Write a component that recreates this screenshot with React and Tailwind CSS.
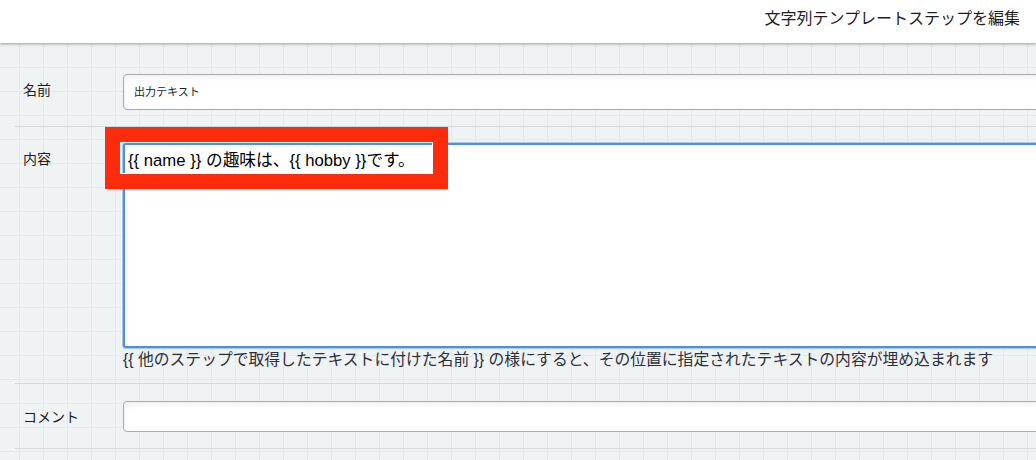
import React from 'react';

const CJK = "font-['Liberation_Sans','Noto_Sans_CJK_JP',sans-serif]";

function FieldLabel({ children }) {
  return (
    <div className="w-[100px] shrink-0 pt-[6px] text-[14px] leading-[20px] text-[#1e1e1e]">
      {children}
    </div>
  );
}

export default function App() {
  return (
    <div
      className={`relative h-[460px] w-[1036px] overflow-hidden bg-[#f0f3f4] ${CJK} bg-[linear-gradient(to_right,#e6e9eb_1px,transparent_1px),linear-gradient(to_bottom,#e6e9eb_1px,transparent_1px)] [background-size:24px_24px] [background-position:19px_19px]`}
    >
      {/* Header */}
      <header className="relative z-10 flex h-[43px] items-center justify-end bg-white pb-[6px] pr-[16px] shadow-[0_1px_3px_rgba(0,0,0,0.35)]">
        <h1 className="text-[16px] leading-none text-[#1e1e1e]">文字列テンプレートステップを編集</h1>
      </header>

      {/* Form */}
      <main className="relative pl-[15px] pt-[15px]">
        {/* 名前 */}
        <div className="flex border-b border-[#d6d9dc] py-[16px] pl-[8px]">
          <FieldLabel>名前</FieldLabel>
          <div className="flex h-[36px] w-[940px] shrink-0 items-center rounded-[4px] border border-[#a9a9a9] bg-white pl-[10px] text-[11px] text-[#222] shadow-[inset_0_2px_6px_rgba(0,0,0,0.08)]">
            出力テキスト
          </div>
        </div>

        {/* 内容 */}
        <div className="flex border-b border-[#d6d9dc] pb-[13px] pl-[8px] pt-[16px]">
          <FieldLabel>内容</FieldLabel>
          <div className="flex shrink-0 flex-col">
            <div className="h-[205px] w-[940px] rounded-[3px] border-[2px] border-[#4f8fe0] bg-white pl-[3px] pt-[5px] text-[16.7px] leading-[22px] text-black shadow-[0_0_0_1px_#a9c9f2]">
              {'{{ name }} の趣味は、{{ hobby }}です。'}
            </div>
            <p className="mt-[2px] text-[15.8px] leading-[20px] text-[#2c2f3b]">
              {'{{ 他のステップで取得したテキストに付けた名前 }} の様にすると、その位置に指定されたテキストの内容が埋め込まれます'}
            </p>
          </div>
        </div>

        {/* コメント */}
        <div className="flex border-b border-[#d6d9dc] pb-[16px] pl-[8px] pt-[17px]">
          <FieldLabel>コメント</FieldLabel>
          <div className="h-[31px] w-[940px] shrink-0 rounded-[4px] border border-[#a9a9a9] bg-white shadow-[inset_0_2px_6px_rgba(0,0,0,0.08)]" />
        </div>

        {/* annotation highlight */}
        <div className="pointer-events-none absolute left-[105px] top-[84px] h-[62px] w-[343px] border-[15px] border-[#fe2b0c] shadow-[inset_0_0_0_1px_#ffffff]" />
      </main>
    </div>
  );
}
